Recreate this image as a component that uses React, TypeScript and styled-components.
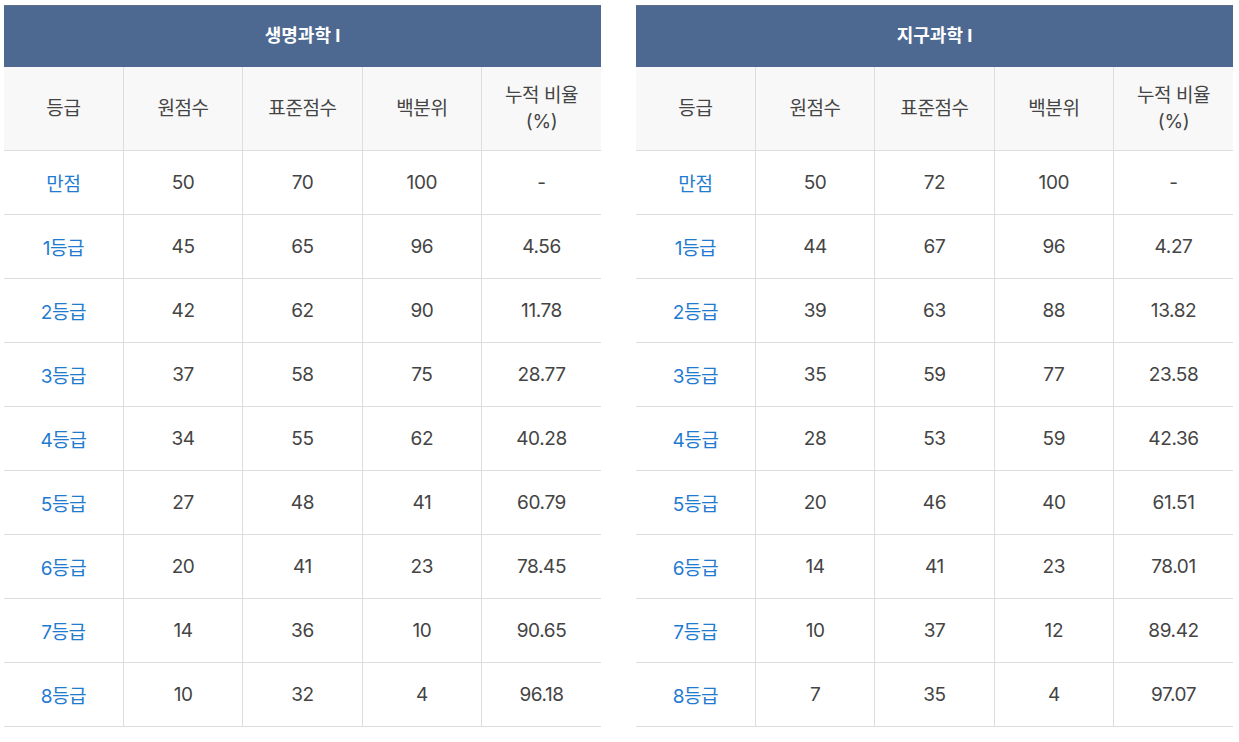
import React from 'react';
import styled, {createGlobalStyle} from 'styled-components';

const GlobalStyle = createGlobalStyle`
  body {
    margin: 0;
    background: #fff;
    font-family: Inter, "Noto Sans CJK KR", sans-serif;
  }
`;

const Page = styled.div`
  display: flex;
  gap: 35px;
  padding: 5px 6px 0 4px;
`;

const Table = styled.table`
  width: 597px;
  border-collapse: collapse;
  table-layout: fixed;
  color: #444;
  font-size: 19px;
  letter-spacing: -0.4px;
`;

const TitleCell = styled.th`
  height: 56px;
  padding: 0 0 5px;
  background: #4d6991;
  color: #fff;
  font-size: 18px;
  font-weight: 700;
  letter-spacing: 0;
  text-align: center;
  border-top: 1px solid #5f6f85;
`;

const HeadCell = styled.th`
  height: 83px;
  padding: 0;
  background: #f8f8f8;
  font-weight: 400;
  line-height: 26px;
  text-align: center;
  color: #444;
  border-bottom: 1px solid #ddd;
  border-left: 1px solid #ddd;
  &:first-child {
    border-left: none;
  }
`;

const Cell = styled.td<{ $grade?: boolean }>`
  height: 63px;
  padding: 0;
  text-align: center;
  color: ${p => (p.$grade ? '#1f7bd0' : '#444')};
  border-bottom: 1px solid #ddd;
  border-left: 1px solid #ddd;
  &:first-child {
    border-left: none;
  }
`;

type Subject = { title: string; rows: string[][] };

const subjects: Subject[] = [
  {
    title: '생명과학 I',
    rows: [
      ['만점', '50', '70', '100', '-'],
      ['1등급', '45', '65', '96', '4.56'],
      ['2등급', '42', '62', '90', '11.78'],
      ['3등급', '37', '58', '75', '28.77'],
      ['4등급', '34', '55', '62', '40.28'],
      ['5등급', '27', '48', '41', '60.79'],
      ['6등급', '20', '41', '23', '78.45'],
      ['7등급', '14', '36', '10', '90.65'],
      ['8등급', '10', '32', '4', '96.18'],
    ],
  },
  {
    title: '지구과학 I',
    rows: [
      ['만점', '50', '72', '100', '-'],
      ['1등급', '44', '67', '96', '4.27'],
      ['2등급', '39', '63', '88', '13.82'],
      ['3등급', '35', '59', '77', '23.58'],
      ['4등급', '28', '53', '59', '42.36'],
      ['5등급', '20', '46', '40', '61.51'],
      ['6등급', '14', '41', '23', '78.01'],
      ['7등급', '10', '37', '12', '89.42'],
      ['8등급', '7', '35', '4', '97.07'],
    ],
  },
];

function ScoreTable({subject}: { subject: Subject }) {
  return (
    <Table>
      <thead>
        <tr>
          <TitleCell colSpan={5}>{subject.title}</TitleCell>
        </tr>
        <tr>
          <HeadCell>등급</HeadCell>
          <HeadCell>원점수</HeadCell>
          <HeadCell>표준점수</HeadCell>
          <HeadCell>백분위</HeadCell>
          <HeadCell>누적 비율<br/>(%)</HeadCell>
        </tr>
      </thead>
      <tbody>
        {subject.rows.map(row => (
          <tr key={row[0]}>
            {row.map((v, i) => (
              <Cell key={i} $grade={i === 0}>{v}</Cell>
            ))}
          </tr>
        ))}
      </tbody>
    </Table>
  );
}

export default function App() {
  return (
    <>
      <GlobalStyle/>
      <Page>
        {subjects.map(s => <ScoreTable key={s.title} subject={s}/>)}
      </Page>
    </>
  );
}
